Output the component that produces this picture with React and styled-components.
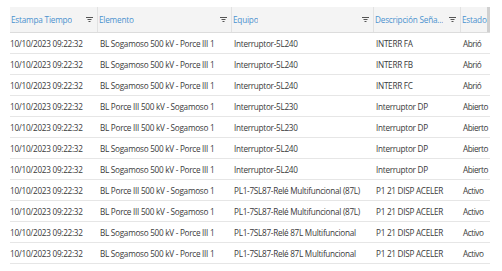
import React from "react";
import styled, { createGlobalStyle } from "styled-components";

const Global = createGlobalStyle`
  html, body { margin: 0; padding: 0; background: #fff; overflow: hidden; }
  body { font-family: "Open Sans", "Noto Sans", sans-serif; }
`;

const cols = [
  { key: "t", label: "Estampa Tiempo", w: 88, filter: true },
  { key: "e", label: "Elemento", w: 134, filter: true },
  { key: "q", label: "Equipo", w: 142, filter: true },
  { key: "d", label: "Descripción Seña…", title: "Descripción Señal", w: 87, filter: true },
  { key: "s", label: "Estado", w: 29, filter: false },
];

const rows = [
  ["10/10/2023 09:22:32", "BL Sogamoso 500 kV - Porce III 1", "Interruptor-5L240", "INTERR FA", "Abrió"],
  ["10/10/2023 09:22:32", "BL Sogamoso 500 kV - Porce III 1", "Interruptor-5L240", "INTERR FB", "Abrió"],
  ["10/10/2023 09:22:32", "BL Sogamoso 500 kV - Porce III 1", "Interruptor-5L240", "INTERR FC", "Abrió"],
  ["10/10/2023 09:22:32", "BL Porce III 500 kV - Sogamoso 1", "Interruptor-5L230", "Interruptor DP", "Abierto"],
  ["10/10/2023 09:22:32", "BL Porce III 500 kV - Sogamoso 1", "Interruptor-5L230", "Interruptor DP", "Abierto"],
  ["10/10/2023 09:22:32", "BL Sogamoso 500 kV - Porce III 1", "Interruptor-5L240", "Interruptor DP", "Abierto"],
  ["10/10/2023 09:22:32", "BL Sogamoso 500 kV - Porce III 1", "Interruptor-5L240", "Interruptor DP", "Abierto"],
  ["10/10/2023 09:22:32", "BL Porce III 500 kV - Sogamoso 1", "PL1-7SL87-Relé Multifuncional (87L)", "P1 21 DISP ACELER", "Activo"],
  ["10/10/2023 09:22:32", "BL Porce III 500 kV - Sogamoso 1", "PL1-7SL87-Relé Multifuncional (87L)", "P1 21 DISP ACELER", "Activo"],
  ["10/10/2023 09:22:32", "BL Sogamoso 500 kV - Porce III 1", "PL1-7SL87-Relé 87L Multifuncional", "P1 21 DISP ACELER", "Activo"],
  ["10/10/2023 09:22:32", "BL Sogamoso 500 kV - Porce III 1", "PL1-7SL87-Relé 87L Multifuncional", "P1 21 DISP ACELER", "Activo"],
];

const Page = styled.div`
  padding: 7px 0 0 10px;
`;

const Grid = styled.div`
  width: 480px;
  display: flex;
  flex-direction: column;
  font-size: 8.2px;
  letter-spacing: -0.28px;
`;

const HeaderRow = styled.div`
  display: flex;
  height: 26px;
  background: #f4f4f4;
  border-bottom: 1px solid #dcdcdc;
  box-sizing: border-box;
`;

const HeaderCell = styled.div`
  width: ${(p) => p.$w}px;
  flex: none;
  box-sizing: border-box;
  display: flex;
  align-items: center;
  gap: 2px;
  padding: 0 ${(p) => (p.$last ? 0 : 4)}px 0 1px;
  border-right: ${(p) => (p.$last ? "none" : "1px solid #e2e2e2")};
  color: #4b92cf;
  letter-spacing: -0.2px;
  overflow: hidden;
`;

const HeaderLabel = styled.span`
  flex: 0 1 auto;
  min-width: 0;
  white-space: nowrap;
  overflow: hidden;
  text-overflow: clip;
`;

const FilterSvg = styled.svg`
  flex: none;
  margin-left: auto;
`;

const Scrollbar = styled.div`
  width: 3px;
  flex: none;
  background: #d0d0d0;
`;

const Row = styled.div`
  display: flex;
  height: 21px;
  box-sizing: border-box;
  border-bottom: 1px solid #e6e6e6;
`;

const Cell = styled.div`
  width: ${(p) => p.$w}px;
  flex: none;
  box-sizing: border-box;
  display: flex;
  align-items: center;
  padding: 1px 0 0 ${(p) => p.$pl}px;
  color: #3a3a3a;
  white-space: nowrap;
  overflow: hidden;
  letter-spacing: ${(p) => (p.$last ? "-0.45px" : "inherit")};
`;

const FilterIcon = () => (
  <FilterSvg width="7" height="5" viewBox="0 0 7 5">
    <rect x="0" y="0" width="7" height="1" fill="#555" />
    <rect x="1.5" y="2" width="4" height="1" fill="#555" />
    <rect x="2.5" y="4" width="2" height="1" fill="#555" />
  </FilterSvg>
);

export default function App() {
  const last = cols.length - 1;
  return (
    <>
      <Global />
      <Page>
        <Grid>
          <HeaderRow>
            {cols.map((c, i) => (
              <HeaderCell key={c.key} $w={c.w - (i === last ? 3 : 0)} $last={i === last} title={c.title}>
                <HeaderLabel>{c.label}</HeaderLabel>
                {c.filter && <FilterIcon />}
              </HeaderCell>
            ))}
            <Scrollbar />
          </HeaderRow>
          {rows.map((r, ri) => (
            <Row key={ri}>
              {r.map((v, ci) => (
                <Cell key={ci} $w={cols[ci].w} $pl={ci === 0 ? 0 : 2} $last={ci === last}>
                  {v}
                </Cell>
              ))}
            </Row>
          ))}
        </Grid>
      </Page>
    </>
  );
}
